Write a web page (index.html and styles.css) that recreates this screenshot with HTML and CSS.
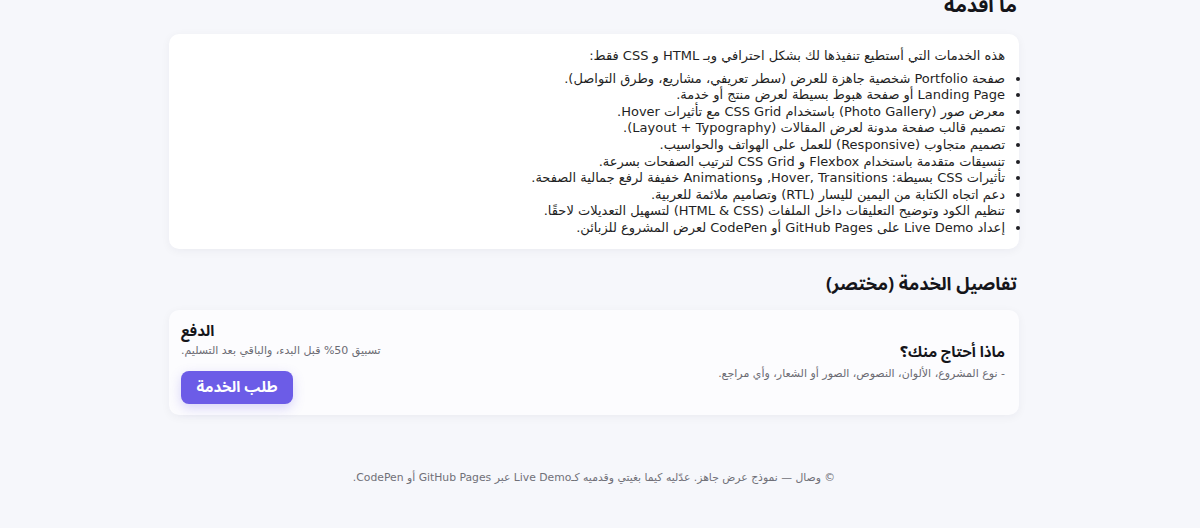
FILE: index.html
```html
<!DOCTYPE html>
<html lang="ar" dir="rtl">
  <head>
    <meta charset="UTF-8" />
    <meta name="viewport" content="width=device-width, initial-scale=1.0" />
    <title>وصال - خدمات HTML و CSS</title>
    <link rel="stylesheet" href="styles.css">
  </head>
  <body>
    <main class="page">
      <section class="section">
        <h2 class="section-title">ما أقدمه</h2>
        <div class="card services">
          <p class="services-intro">هذه الخدمات التي أستطيع تنفيذها لك بشكل احترافي وبـ HTML و CSS فقط:</p>
          <ul class="services-list">
            <li>صفحة Portfolio شخصية جاهزة للعرض (سطر تعريفي، مشاريع، وطرق التواصل).</li>
            <li>Landing Page أو صفحة هبوط بسيطة لعرض منتج أو خدمة.</li>
            <li>معرض صور (Photo Gallery) باستخدام CSS Grid مع تأثيرات Hover.</li>
            <li>تصميم قالب صفحة مدونة لعرض المقالات (Layout + Typography).</li>
            <li>تصميم متجاوب (Responsive) للعمل على الهواتف والحواسيب.</li>
            <li>تنسيقات متقدمة باستخدام Flexbox و CSS Grid لترتيب الصفحات بسرعة.</li>
            <li>تأثيرات CSS بسيطة: Hover, Transitions, وAnimations خفيفة لرفع جمالية الصفحة.</li>
            <li>دعم اتجاه الكتابة من اليمين لليسار (RTL) وتصاميم ملائمة للعربية.</li>
            <li>تنظيم الكود وتوضيح التعليقات داخل الملفات (HTML &amp; CSS) لتسهيل التعديلات لاحقًا.</li>
            <li>إعداد Live Demo على GitHub Pages أو CodePen لعرض المشروع للزبائن.</li>
          </ul>
        </div>
      </section>

      <section class="section">
        <h2 class="section-title small">تفاصيل الخدمة (مختصر)</h2>
        <div class="card details">
          <div class="details-need">
            <h3>ماذا أحتاج منك؟</h3>
            <p>- نوع المشروع، الألوان، النصوص، الصور أو الشعار، وأي مراجع.</p>
          </div>
          <div class="details-pay">
            <h3>الدفع</h3>
            <p>تسبيق 50% قبل البدء، والباقي بعد التسليم.</p>
            <a href="#" class="btn-order">طلب الخدمة</a>
          </div>
        </div>
      </section>

      <footer class="footer">
        © وصال — نموذج عرض جاهز. عدّليه كيما بغيتي وقدميه كـLive Demo عبر GitHub Pages أو CodePen.
      </footer>
    </main>
  </body>
</html>
```

FILE: styles.css
```css
:root {
  --bg: #f6f7fb;
  --card: #ffffff;
  --text: #1f1f24;
  --muted: #6b6b73;
  --primary: #6c5ce7;
}

* {
  box-sizing: border-box;
  margin: 0;
  padding: 0;
}

body {
  background: var(--bg);
  color: var(--text);
  font-family: "DejaVu Sans", sans-serif;
  height: 528px;
  overflow: hidden;
  padding-right: 12px;
}

.page {
  width: 850px;
  margin: -9px auto 0;
}

.section {
  margin-bottom: 22px;
}

.section-title {
  font-family: "Noto Sans Arabic", "Noto Sans", sans-serif;
  font-size: 20px;
  font-weight: 700;
  color: #15151a;
  line-height: 30px;
  margin-bottom: 13px;
  padding-right: 2px;
}

.section-title.small {
  font-size: 18px;
  line-height: 26px;
  margin-bottom: 13px;
}

.card {
  background: var(--card);
  border-radius: 10px;
  box-shadow: 0 2px 10px rgba(20, 20, 60, 0.05);
}

/* Services */
.services {
  padding: 14px 14px 12px;
  font-size: 13px;
  line-height: 16.6px;
}

.services-intro {
  margin-bottom: 6px;
}

.services-list {
  list-style: disc;
  padding-right: 0;
}

/* Details */
.details {
  display: flex;
  justify-content: space-between;
  align-items: center;
  padding: 10px 14px 11px 12px;
  background: #fcfcfe;
}

.details h3 {
  font-family: "Noto Sans Arabic", "Noto Sans", sans-serif;
  font-size: 15px;
  font-weight: 700;
  color: #15151a;
  line-height: 22px;
}

.details p {
  font-size: 11px;
  color: var(--muted);
  line-height: 16px;
}

.details-need h3 {
  margin-bottom: 3px;
}

.details-pay {
  display: flex;
  flex-direction: column;
  align-items: flex-end;
}

.details-pay h3 {
  margin-bottom: 1px;
}

.details-pay p {
  margin-bottom: 12px;
}

.btn-order {
  display: inline-block;
  width: 112px;
  height: 33px;
  line-height: 33px;
  text-align: center;
  background: var(--primary);
  color: white;
  border-radius: 8px;
  font-family: "Noto Sans Arabic", "Noto Sans", sans-serif;
  font-size: 15px;
  font-weight: 700;
  text-decoration: none;
  box-shadow: 0 4px 12px rgba(108, 92, 231, 0.25);
}

.footer {
  text-align: center;
  font-size: 10.8px;
  color: #707078;
  margin-top: 56px;
}
```
